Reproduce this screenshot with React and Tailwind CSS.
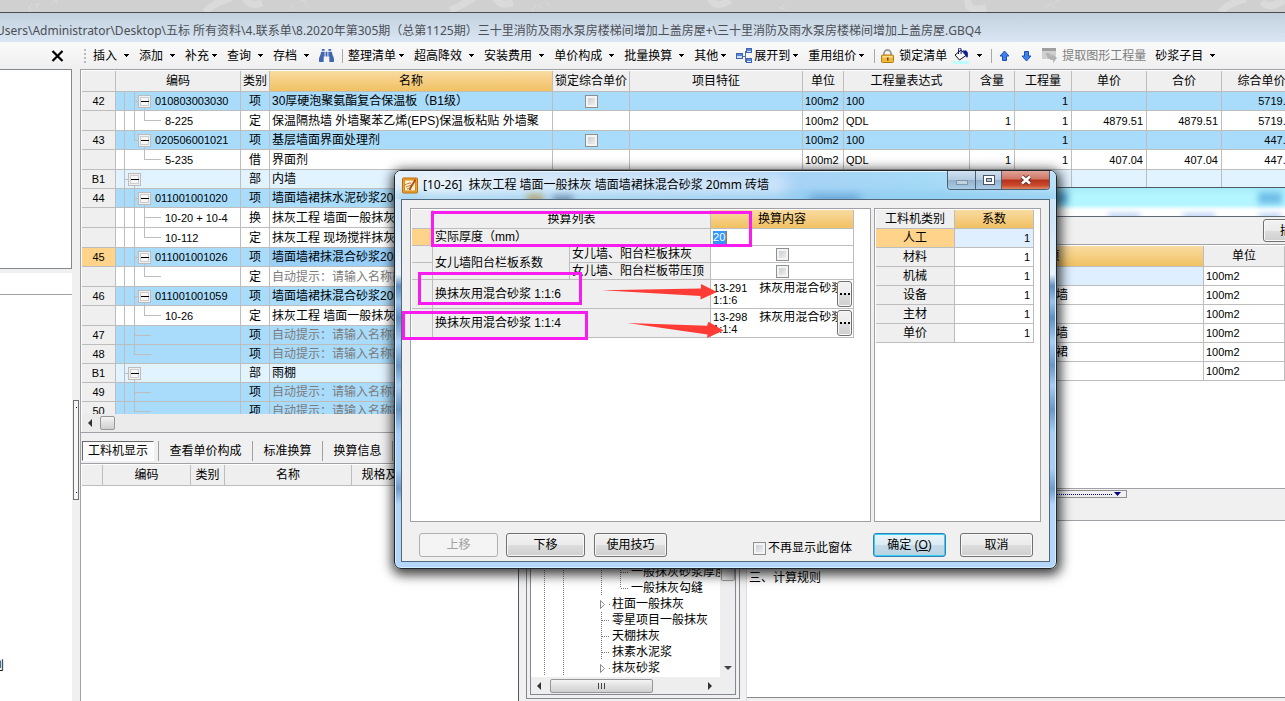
import React from "react";
import { FaBinoculars } from "react-icons/fa";

const CARET = (
  <svg width="6" height="3" viewBox="0 0 6 3" className="shrink-0" shapeRendering="crispEdges">
    <path d="M0 0h5v1h-1v1h-1v1h-1v-1h-1v-1h-1z" fill="#000" />
  </svg>
);

function Drop({ label, tight }) {
  return (
    <button className={"flex shrink-0 items-center pr-[9px] whitespace-nowrap " + (tight ? "gap-[3px]" : "gap-[7px]")}>
      <span>{label}</span>
      {CARET}
    </button>
  );
}

function Sep() {
  return <span className="h-[14px] w-px shrink-0 bg-[#a8a8a8]" />;
}

function Toolbar() {
  return (
    <div className="flex h-[27px] items-center bg-gradient-to-b from-[#fafafa] to-[#efefef] text-[12px] text-black">
      <svg width="4" height="16" viewBox="0 0 4 16" className="mr-[5px] ml-1 shrink-0" shapeRendering="crispEdges">
        <path d="M0 1h2v2h-2zM0 5h2v2h-2zM0 9h2v2h-2zM0 13h2v2h-2z" fill="#b8b8b8" />
      </svg>
      <Drop label="插入" />
      <Drop label="添加" />
      <Drop label="补充" tight />
      <Drop label="查询" />
      <Drop label="存档" />
      <button aria-label="查找" className="mr-2 shrink-0">
        <FaBinoculars size={15} color="#3f66ae" />
      </button>
      <Sep />
      <span className="w-[5px] shrink-0" />
      <Drop label="整理清单" tight />
      <Drop label="超高降效" />
      <Drop label="安装费用" />
      <Drop label="单价构成" />
      <Drop label="批量换算" />
      <Drop label="其他" tight />
      <svg width="17" height="16" viewBox="0 0 17 16" className="mr-px shrink-0" shapeRendering="crispEdges">
        <path d="M6 8h3M9 3v10M9 3h2M9 13h2" stroke="#5b6f94" fill="none" />
        <rect x="0.500" y="5.500" width="6" height="5" fill="#cfe0fb" stroke="#3f63ad" />
        <rect x="10.500" y="0.500" width="5" height="4" fill="#cfe0fb" stroke="#3f63ad" />
        <rect x="10.500" y="10.500" width="5" height="4" fill="#cfe0fb" stroke="#3f63ad" />
        <path d="M1 6h5v2H1zM11 1h4v2h-4zM11 11h4v2h-4z" fill="#5a86d6" />
      </svg>
      <Drop label="展开到" tight />
      <Drop label="重用组价" tight />
      <Sep />
      <button className="ml-1 flex shrink-0 items-center gap-[5px] pl-[2px] whitespace-nowrap">
        <svg width="13" height="14" viewBox="0 0 13 14">
          <path d="M3 7V4.500a3.500 3.500 0 0 1 7 0V7" fill="none" stroke="#9a9a9a" strokeWidth="1.800" />
          <rect x="0.500" y="6" width="12" height="7.500" rx="1" fill="#f0b93c" stroke="#b47a14" />
          <path d="M1.500 7h10v1.500h-10z" fill="#fbe08c" />
          <path d="M6 8.500h1.500v3H6z" fill="#6b4608" />
        </svg>
        <span>锁定清单</span>
      </button>
      <button aria-label="填充颜色" className="ml-[6px] flex shrink-0 items-center gap-2 pr-2">
        <svg width="16" height="16" viewBox="0 0 16 16">
          <path d="M2 7 8 2l5 5.500-6.500 4.500z" fill="#f6f6f6" stroke="#111" />
          <path d="M5.500 6V1.300a1.300 1.300 0 0 1 2.600 0V6" fill="none" stroke="#0a1a7a" />
          <path d="M9.500 2.500l3.500 0c2 1 2.200 3 1.700 6.500-.6 1-1.700.5-1.700-1z" fill="#0a1a9a" />
          <rect x="0" y="13" width="16" height="3" fill="#bdffff" />
        </svg>
        {CARET}
      </button>
      <Sep />
      <button aria-label="上移行" className="ml-[7px] shrink-0">
        <svg width="11" height="12" viewBox="0 0 11 12">
          <path d="M5.500 1 10 6H7.500v4.500h-4V6H1z" fill="#3c82ea" stroke="#1f4fb4" />
        </svg>
      </button>
      <button aria-label="下移行" className="ml-[11px] shrink-0">
        <svg width="11" height="12" viewBox="0 0 11 12">
          <path d="M5.500 11 10 6H7.500V1.500h-4V6H1z" fill="#3c82ea" stroke="#1f4fb4" />
        </svg>
      </button>
      <button disabled className="ml-[10px] flex shrink-0 items-center gap-1 whitespace-nowrap text-[#7d7d7d]">
        <svg width="16" height="15" viewBox="0 0 16 15">
          <rect x="0" y="0" width="14" height="11" fill="#cfcfcf" />
          <rect x="0" y="0" width="14" height="3" fill="#9f9f9f" />
          <path d="M4 5c4 0 5 1 6 4V6l5 4-4 5v-3c-4 0-6-2-7-7z" fill="#b2b2b2" />
        </svg>
        <span>提取图形工程量</span>
      </button>
      <span className="w-[9px] shrink-0" />
      <Drop label="砂浆子目" />
    </div>
  );
}

const HEADS = [
  ["", 34], ["编码", 125], ["类别", 29], ["名称", 283], ["锁定综合单价", 77], ["项目特征", 173], ["单位", 41],
  ["工程量表达式", 126], ["含量", 45], ["工程量", 57], ["单价", 75], ["合价", 75], ["综合单价", 80],
];

/* v = full guides, h = half guides, s = horizontal stub, b = box x, d = guide starting below the box */
const T = {
  item: { v: [8, 18], s: [18, 22], b: 22, d: 28, tx: 39 },
  itemLast: { v: [8], h: [18], s: [18, 22], b: 22, d: 28, tx: 39 },
  child: { v: [8, 18], h: [28], s: [28, 45], tx: 49 },
  childMore: { v: [8, 18, 28], s: [28, 45], tx: 49 },
  childTail: { v: [8], h: [28], s: [28, 45], tx: 49 },
  part: { v: [8], s: [8, 12], b: 12, d: 18, tx: 39 },
  leaf: { v: [8, 18], s: [18, 35], tx: 39 },
  leafLast: { v: [8], h: [18], s: [18, 35], tx: 39 },
};
const HINT = "自动提示：请输入名称简称";
const ROWS = [
  { n: "42", t: "item", c: "010803003030", k: "项", m: "30厚硬泡聚氨酯复合保温板（B1级）", x: 1, r: ["100m2", "100", "", "1", "", "", "5719.51"] },
  { n: "", t: "child", c: "8-225", k: "定", m: "保温隔热墙 外墙聚苯乙烯(EPS)保温板粘贴 外墙聚", r: ["100m2", "QDL", "1", "1", "4879.51", "4879.51", "5719.51"] },
  { n: "43", t: "itemLast", c: "020506001021", k: "项", m: "基层墙面界面处理剂", x: 1, r: ["100m2", "100", "", "1", "", "", "447.04"] },
  { n: "", t: "childTail", c: "5-235", k: "借", m: "界面剂", r: ["100m2", "QDL", "1", "1", "407.04", "407.04", "447.04"] },
  { n: "B1", t: "part", c: "", k: "部", m: "内墙" },
  { n: "44", t: "item", c: "011001001020", k: "项", m: "墙面墙裙抹水泥砂浆20mm" },
  { n: "", t: "childMore", c: "10-20 + 10-4", k: "换", m: "抹灰工程 墙面一般抹灰" },
  { n: "", t: "child", c: "10-112", k: "定", m: "抹灰工程 现场搅拌抹灰" },
  { n: "45", t: "item", c: "011001001026", k: "项", m: "墙面墙裙抹混合砂浆20mm", sel: 1 },
  { n: "", t: "child", c: "", k: "定", m: HINT, g: 1 },
  { n: "46", t: "item", c: "011001001059", k: "项", m: "墙面墙裙抹混合砂浆20mm" },
  { n: "", t: "child", c: "10-26", k: "定", m: "抹灰工程 墙面一般抹灰" },
  { n: "47", t: "leaf", c: "", k: "项", m: HINT, g: 1 },
  { n: "48", t: "leafLast", c: "", k: "项", m: HINT, g: 1 },
  { n: "B1", t: "part", c: "", k: "部", m: "雨棚" },
  { n: "49", t: "leaf", c: "", k: "项", m: HINT, g: 1 },
  { n: "50", t: "leafLast", c: "", k: "项", m: HINT, g: 1 },
];

function Guides({ type }) {
  const g = T[type];
  return (
    <svg width={g.tx} height="19" viewBox={"0 0 " + g.tx + " 19"} className="block shrink-0 overflow-visible" shapeRendering="crispEdges">
      {(g.v || []).map((x) => <rect key={x} x={x} y="0" width="1" height="19" fill="#bdbdbd" />)}
      {(g.h || []).map((x) => <rect key={x} x={x} y="0" width="1" height="10" fill="#bdbdbd" />)}
      <rect x={g.s[0]} y="9" width={g.s[1] - g.s[0]} height="1" fill="#bdbdbd" />
      {g.d && <rect x={g.d} y="9" width="1" height="10" fill="#bdbdbd" />}
      {g.b && (
        <g>
          <rect x={g.b + 0.5} y="3.500" width="12" height="12" fill="#f0f0f0" stroke="#bcbcbc" />
          <rect x={g.b + 2.5} y="5.500" width="8" height="8" fill="#f6f6f6" stroke="#cccccc" />
          <rect x={g.b + 3} y="9" width="8" height="1" fill="#000" />
        </g>
      )}
    </svg>
  );
}

const CHECK =
  "block size-[13px] appearance-none border border-[#8e8f8f] bg-gradient-to-br from-[#c2c6cc] to-[#f6f6f6] shadow-[inset_0_0_0_2px_#f4f4f4]";
const CELL = "border-r border-b border-[#bdbdbd] p-0 leading-[16px] whitespace-nowrap overflow-hidden ";
const GOLD = "bg-gradient-to-b from-[#f9dba0] to-[#f1c162] ";

function MainGrid() {
  return (
    <div className="h-[343px] overflow-hidden">
      <table className="w-[1220px] table-fixed border-separate border-spacing-0 text-[12px]">
        <colgroup>
          {HEADS.map((h, i) => <col key={i} style={{ width: h[1] }} />)}
        </colgroup>
        <thead>
          <tr className="h-[21px]">
            {HEADS.map((h, i) => (
              <th key={i} className={CELL + "h-[21px] text-center font-normal " + (i === 3 ? GOLD : "bg-[#efefef]")}>{h[0]}</th>
            ))}
          </tr>
        </thead>
        <tbody>
          {ROWS.map((r, i) => {
            const bg = r.t === "part" ? "bg-[#e1f3ff] " : r.t.startsWith("child") ? "bg-white " : "bg-[#a9dbfa] ";
            const h = r.t.startsWith("child") ? "h-[20px] " : "h-[19px] ";
            const v = r.r || ["", "", "", "", "", "", ""];
            return (
              <tr key={i} className={h}>
                <td className={CELL + h + "text-center text-[11px] " + (r.sel ? "bg-[#ffd38a]" : "bg-[#efefef]")}>{r.n}</td>
                <td className={CELL + h + bg}>
                  <div className={"flex items-center overflow-hidden text-[11px] " + (r.t.startsWith("child") ? "h-[19px]" : "h-[18px]")}>
                    <Guides type={r.t} />
                    <span>{r.c}</span>
                  </div>
                </td>
                <td className={CELL + h + bg + "text-center"}>{r.k}</td>
                <td className={CELL + h + (r.sel ? "bg-[#99d0fa] " : bg) + "pl-[2px] " + (r.g ? "text-[#7c7c7c]" : "")}>{r.m}</td>
                <td className={CELL + h + bg}>
                  {r.x && <input type="checkbox" aria-label="锁定综合单价" className={CHECK + " mx-auto"} />}
                </td>
                <td className={CELL + h + bg} />
                <td className={CELL + h + bg + "pl-[2px] text-[11px]"}>{v[0]}</td>
                <td className={CELL + h + bg + "pl-[2px] text-[11px]"}>{v[1]}</td>
                <td className={CELL + h + bg + "pr-[3px] text-right text-[11px]"}>{v[2]}</td>
                <td className={CELL + h + bg + "pr-[3px] text-right text-[11px]"}>{v[3]}</td>
                <td className={CELL + h + bg + "pr-[3px] text-right text-[11px]"}>{v[4]}</td>
                <td className={CELL + h + bg + "pr-[3px] text-right text-[11px]"}>{v[5]}</td>
                <td className={CELL + h + bg + "pr-[3px] text-right text-[11px]"}>{v[6]}</td>
              </tr>
            );
          })}
        </tbody>
      </table>
    </div>
  );
}

const DETAIL = [["", 21], ["编码", 88], ["类别", 34], ["名称", 127], ["规格及型号", 80]];

function MainPane() {
  return (
    <div className="flex min-w-0 flex-1 flex-col border-l border-[#a0a0a6] bg-[#f0f0f0]">
      <div className="border-t border-b border-[#a0a0a6] bg-white pt-px pl-px">
        <MainGrid />
        <div className="flex h-[18px] items-center bg-[#ebebeb] pl-1">
          <svg width="8" height="8" viewBox="0 0 8 8"><path d="M6 0v8L2 4z" fill="#333" /></svg>
          <span className="ml-[6px] h-[14px] w-[15px] rounded-[2px] border border-[#979797] bg-gradient-to-b from-[#f4f4f4] to-[#cfcfcf]" />
        </div>
      </div>
      <div className="flex h-[30px] items-center pt-[6px] pl-px text-[12px] whitespace-nowrap">
        <button className="h-[20px] w-[72px] border border-t-[#696969] border-r-white border-b-white border-l-[#696969] bg-[#fafafa] leading-[18px]">工料机显示</button>
        <span className="ml-1 h-5 w-px bg-[#a0a0a0]" />
        <button className="w-[93px] leading-[18px]">查看单价构成</button>
        <span className="h-5 w-px bg-[#a0a0a0]" />
        <button className="w-[69px] leading-[18px]">标准换算</button>
        <span className="h-5 w-px bg-[#a0a0a0]" />
        <button className="w-[69px] leading-[18px]">换算信息</button>
        <span className="h-5 w-px bg-[#a0a0a0]" />
      </div>
      <div className="flex-1 border-t border-[#a0a0a6] bg-white pt-px pl-px">
        <table className="w-[350px] table-fixed border-separate border-spacing-0 text-[12px]">
          <colgroup>{DETAIL.map((h, i) => <col key={i} style={{ width: h[1] }} />)}</colgroup>
          <thead>
            <tr>
              {DETAIL.map((h, i) => (
                <th key={i} className={CELL + "h-[21px] bg-[#efefef] text-center font-normal"}>{h[0]}</th>
              ))}
            </tr>
          </thead>
        </table>
      </div>
    </div>
  );
}

function SidePane() {
  return (
    <div className="flex w-[80px] shrink-0 bg-[#f0f0f0]">
      <div className="flex w-[72px] flex-col">
        <div className="h-[200px] border-t border-r border-b border-[#828790] bg-white" />
        <div className="h-1" />
        <div className="h-[22px] border-b border-[#a0a0a6] bg-white" />
        <div className="flex flex-1 flex-col justify-end overflow-hidden bg-white pb-[26px]">
          <span className="-ml-2 text-[12px] leading-[18px]">则</span>
        </div>
      </div>
      <div className="flex flex-1 flex-col pt-[331px] pl-px">
        <div className="flex h-[100px] w-[6px] flex-col items-center justify-between border border-[#707070] bg-[#f6f6f6] py-[6px]">
          <span className="size-px bg-[#000080]" />
          <span className="size-px bg-[#000080]" />
        </div>
      </div>
    </div>
  );
}

const TREE = [
  { t: "一般抹灰砂浆厚度", deep: 1 },
  { t: "一般抹灰勾缝", deep: 1, last: 1 },
  { t: "柱面一般抹灰", tri: 1 },
  { t: "零星项目一般抹灰" },
  { t: "天棚抹灰" },
  { t: "抹素水泥浆" },
  { t: "抹灰砂浆", tri: 1 },
];

function TreeRow({ n }) {
  const w = n.deep ? 100 : 81;
  const s = { stroke: "#7a7a7a", strokeDasharray: "1 1", fill: "none" };
  return (
    <li className="flex h-4 items-center whitespace-nowrap">
      <svg width={w} height="16" viewBox={"0 0 " + w + " 16"} className="shrink-0" shapeRendering="crispEdges">
        <path d="M13.500 0v16M32.500 0v16" {...s} />
        {!n.tri && <path d="M70.500 0v16" {...s} />}
        {n.deep && <path d={n.last ? "M89.500 0v8" : "M89.500 0v16"} {...s} />}
        {n.deep && <path d="M90 8.500h8" {...s} />}
        {!n.deep && !n.tri && <path d="M71 8.500h8" {...s} />}
        {n.tri && <path d="M69.500 4.500v8l4-4z" fill="#fff" stroke="#8a8a8a" shapeRendering="auto" />}
        {n.tri && <rect x="78" y="8" width="1" height="1" fill="#777" />}
      </svg>
      <span>{n.t}</span>
    </li>
  );
}

const BTN = "rounded-[3px] border border-[#707070] bg-[linear-gradient(#f2f2f2,#ebebeb_50%,#dddddd_51%,#cfcfcf)] shadow-[inset_0_0_0_1px_#f8f8f8] text-[12px] ";
const PARTS = ["", "砖墙", "", "外墙", "墙裙", ""];

function QueryWindow() {
  return (
    <section className="absolute top-[187px] right-0 bottom-0 left-[518px] flex flex-col border-t border-l border-[#4d5a66] bg-[#f0f0f0]">
      <div className="relative h-[28px] shrink-0 overflow-hidden bg-[linear-gradient(#a8ecfa,#b4f6ff_30%,#b4f6ff_60%,#ffffff_78%)]">
        <span className="absolute top-1 right-[3px] h-3 w-[24px] bg-[#6fbdea] blur-[3px]" />
        <span className="absolute top-1 right-[217px] h-3 w-[14px] bg-[#5cb2e6] blur-[3px]" />
        <span className="absolute right-[145px] -bottom-1 h-[6px] w-[32px] bg-[#a9c8f2] blur-[3px]" />
        <span className="absolute right-[70px] -bottom-1 h-[6px] w-[32px] bg-[#a9c8f2] blur-[3px]" />
        <span className="absolute right-1 -bottom-1 h-[6px] w-[22px] bg-[#a9c8f2] blur-[3px]" />
      </div>
      <div className="flex h-[29px] shrink-0 items-center justify-end overflow-hidden border-t border-b border-t-[#5f6a74] border-b-[#a0a0a6]">
        <button className={BTN + "-mr-[20px] h-[23px] w-[42px] shrink-0 pl-4 whitespace-nowrap"}>插入</button>
      </div>
      <div className="flex min-h-0 flex-1">
        <div className="flex w-[227px] shrink-0 flex-col py-[2px] pr-[6px] pl-[7px]">
          <div className="flex min-h-0 flex-1 border border-[#828790] p-[3px]">
            <div className="flex min-w-0 flex-1 flex-col border border-[#828790] bg-white">
              <div className="flex min-h-0 flex-1">
                <ul className="flex min-w-0 flex-1 flex-col justify-end overflow-hidden pb-px text-[12px]">
                  {TREE.map((n) => <TreeRow key={n.t} n={n} />)}
                </ul>
                <div className="flex w-[15px] shrink-0 flex-col items-center justify-end bg-[#eeeeee] pb-[7px]">
                  <span className="mb-[85px] h-[60px] w-[14px] rounded-[2px] border border-[#979797] bg-gradient-to-r from-[#f4f4f4] to-[#cfcfcf]" />
                  <svg width="8" height="4" viewBox="0 0 8 4"><path d="M0 0h8L4 4z" fill="#444" /></svg>
                </div>
              </div>
              <div className="flex h-[17px] items-center bg-[#eeeeee] px-[6px]">
                <svg width="5" height="8" viewBox="0 0 5 8"><path d="M4 0v8L0 4z" fill="#333" /></svg>
                <span className="ml-2 flex h-[14px] w-[103px] items-center justify-center gap-[2px] rounded-[2px] border border-[#979797] bg-gradient-to-b from-[#f4f4f4] to-[#cfcfcf]">
                  <i className="h-[6px] w-px bg-[#444]" />
                  <i className="h-[6px] w-px bg-[#444]" />
                  <i className="h-[6px] w-px bg-[#444]" />
                </span>
                <svg width="5" height="8" viewBox="0 0 5 8" className="mr-4 ml-auto"><path d="M0 0v8l4-4z" fill="#333" /></svg>
              </div>
            </div>
          </div>
        </div>
        <div className="flex min-w-0 flex-1 flex-col border-l border-[#dcdce4]">
          <div className="flex h-[244px] shrink-0 justify-end border-b border-[#a0a0a6] bg-white pt-px">
            <table className="h-max w-[393px] table-fixed border-separate border-spacing-0 text-[12px]">
              <colgroup><col /><col className="w-[81px]" /></colgroup>
              <thead>
                <tr>
                  <th className={CELL + GOLD + "h-[21px] text-center font-normal"}>选项</th>
                  <th className={CELL + "h-[21px] bg-[#efefef] text-center font-normal"}>单位</th>
                </tr>
              </thead>
              <tbody>
                {PARTS.map((u, i) => (
                  <tr key={i}>
                    <td className={CELL + "h-[19px] pl-[152px] " + (i === 0 ? "bg-[#dfefff]" : "bg-white")}>{u}</td>
                    <td className={CELL + "h-[19px] bg-white pl-[2px] text-[11px]"}>100m2</td>
                  </tr>
                ))}
              </tbody>
            </table>
          </div>
          <div className="flex h-[11px] shrink-0 pt-px">
            <div className="flex h-2 w-[380px] items-center border border-[#909090] pr-[5px]">
              <span className="mr-[2px] flex-1 border-t border-dotted border-[#000080]" />
              <svg width="7" height="4" viewBox="0 0 7 4"><path d="M0 0h7L3.500 4z" fill="#000080" /></svg>
            </div>
          </div>
          <div className="h-[21px] shrink-0 border-b border-[#a0a0a6]" />
          <div className="mb-[3px] flex-1 border-b border-[#828790] bg-white pt-[48px] pl-[2px] text-[12px] leading-[18px]">三、计算规则</div>
        </div>
      </div>
    </section>
  );
}

function Field({ children, className }) {
  return <td className={CELL + "bg-[#efefef] pl-[2px] text-left " + (className || "")}>{children}</td>;
}

function ConvertTable() {
  const mat = (code, ratio) => (
    <td className={CELL + "h-[29px] bg-white"}>
      <div className="flex h-[28px] items-center">
        <div className="min-w-0 flex-1 overflow-hidden pl-[2px] leading-[12px]">
          <div className="flex gap-3"><span className="text-[11px]">{code}</span><span>抹灰用混合砂浆</span></div>
          <div className="text-[11px]">{ratio}</div>
        </div>
        <button aria-label={"选择材料 " + ratio} className={BTN + "mr-px flex h-[26px] w-[15px] shrink-0 items-center justify-center gap-[2px]"}>
          <i className="size-[2px] bg-black" /><i className="size-[2px] bg-black" /><i className="size-[2px] bg-black" />
        </button>
      </div>
    </td>
  );
  const mark = (h) => <td className={CELL + h + " bg-[#efefef]"} />;
  return (
    <table className="w-[442px] table-fixed border-separate border-spacing-0 text-[12px]">
      <colgroup><col className="w-[21px]" /><col className="w-[137px]" /><col className="w-[141px]" /><col className="w-[143px]" /></colgroup>
      <thead>
        <tr>
          <th className={CELL + "h-[19px] bg-[#efefef]"} />
          <th colSpan="2" className={CELL + "h-[19px] bg-[#efefef] text-center font-normal"}>换算列表</th>
          <th className={CELL + GOLD + "h-[19px] text-center font-normal"}>换算内容</th>
        </tr>
      </thead>
      <tbody>
        <tr>
          <td className={CELL + "h-[17px] bg-[#ffd38a]"} />
          <td colSpan="2" className={CELL + "bg-[#efefef] pl-[2px]"}><label htmlFor="thick">实际厚度（mm）</label></td>
          <td className={CELL + "bg-white pl-[2px]"}>
            <input id="thick" defaultValue="20" className="block h-[13px] w-[14px] border-r border-[#c87020] bg-[#3397fd] p-0 text-[11px] leading-[13px] text-white outline-none" />
          </td>
        </tr>
        <tr>
          {mark("h-[17px]")}
          <td rowSpan="2" className={CELL + "bg-[#efefef] pl-[2px]"}>女儿墙阳台栏板系数</td>
          <Field><label htmlFor="c1">女儿墙、阳台栏板抹灰</label></Field>
          <td className={CELL + "bg-white"}><input id="c1" type="checkbox" className={CHECK + " mx-auto"} /></td>
        </tr>
        <tr>
          {mark("h-[17px]")}
          <Field><label htmlFor="c2">女儿墙、阳台栏板带压顶</label></Field>
          <td className={CELL + "bg-white"}><input id="c2" type="checkbox" className={CHECK + " mx-auto"} /></td>
        </tr>
        <tr>
          {mark("h-[29px]")}
          <td colSpan="2" className={CELL + "bg-[#efefef] pl-[2px]"}>换抹灰用混合砂浆 1:1:6</td>
          {mat("13-291", "1:1:6")}
        </tr>
        <tr>
          {mark("h-[29px]")}
          <td colSpan="2" className={CELL + "bg-[#efefef] pl-[2px]"}>换抹灰用混合砂浆 1:1:4</td>
          {mat("13-298", "1:1:4")}
        </tr>
      </tbody>
    </table>
  );
}

function Dialog() {
  return (
    <section
      role="dialog"
      aria-label="换算"
      className="absolute top-[170px] left-[394px] flex h-[399px] w-[663px] flex-col rounded-[7px] border border-[#20262c] bg-[linear-gradient(#d4e6f6,#cfe4f6_12%,#eaf2f8_26%,#5f8fc0_29%,#9cc4ea_33%,#5f8fc0_37%,#a9cff5_43%,#6a97c4_49%,#a8cdf2_54%,#6a97c4_60%,#a9cff5_66%,#a9cff5_75%,#6f9cc8_80%,#b4d6fb_84%,#b4d6fb)] px-[6px] pb-[6px] shadow-[inset_0_0_0_1px_#d5edff,1px_3px_12px_3px_rgba(0,0,0,0.75)]"
    >
      <header className="relative -mx-[6px] flex h-[28px] shrink-0 items-start overflow-hidden rounded-t-[6px] bg-[linear-gradient(90deg,#e6f1fa,#c3def6_20%,#a9d1f7_55%,#a5daf6_80%,#bde2f8)] shadow-[inset_1px_1px_0_#e5f4ff]">
        <span className="absolute top-5 left-0 h-5 w-full bg-[#86c8ee] opacity-60 blur-[4px]" />
        <span className="absolute top-1 left-6 h-5 w-[370px] rounded-full bg-white opacity-50 blur-[8px]" />
        <span className="absolute top-[23px] left-[132px] h-3 w-4 bg-[#b59a4a] opacity-70 blur-[3px]" />
        <span className="absolute top-[24px] left-[158px] h-3 w-5 bg-[#5f7f9f] opacity-70 blur-[3px]" />
        <span className="absolute top-[24px] left-[415px] h-3 w-[50px] bg-[#3f7fc0] opacity-50 blur-[4px]" />
        <div className="relative flex items-center pt-[5px] pl-[7px]">
          <svg width="16" height="17" viewBox="0 0 16 17">
            <rect x="0.500" y="1" width="15" height="15" rx="1" fill="#f3a52a" stroke="#b86a10" />
            <rect x="2.500" y="3" width="11" height="11" fill="#fff3d4" stroke="#d98a1c" />
            <path d="M3 8c2-1 3-2 6-2M4 10c2-1 3-1 6-2M5 12c2-1 3-1 4-1" stroke="#c0742a" fill="none" />
            <path d="M13.500 2.500 9 10l-1.500 3" stroke="#b24a12" strokeWidth="1.800" fill="none" />
          </svg>
          <h1 className="ml-[5px] font-['Noto_Sans','Noto_Sans_CJK_SC',sans-serif] text-[12px] leading-[18px] font-normal whitespace-pre text-black">[10-26]  抹灰工程 墙面一般抹灰 墙面墙裙抹混合砂浆 20mm 砖墙</h1>
        </div>
        <div className="relative mr-[6px] ml-auto flex h-[19px] overflow-hidden rounded-b-[4px] border border-t-0 border-[#4c5f73]">
          <button aria-label="最小化" className="flex w-[28px] items-end justify-center border-r border-[#4c5f73] bg-[linear-gradient(#d2e2f0,#b4cbe0_48%,#94b0cb_50%,#a9cce6)] pb-[4px]">
            <span className="h-[5px] w-3 border border-[#7f93a8] bg-[#c4d2de]" />
          </button>
          <button aria-label="最大化" className="flex w-[26px] items-center justify-center border-r border-[#4c5f73] bg-[linear-gradient(#d2e2f0,#b4cbe0_48%,#94b0cb_50%,#a9cce6)]">
            <svg width="12" height="10" viewBox="0 0 12 10" shapeRendering="crispEdges">
              <path d="M0 0h12v10H0z" fill="#4a5564" /><path d="M1 1h10v8H1z" fill="#fff" />
              <path d="M3 3h6v4H3z" fill="#4a5564" /><path d="M4 4h4v2H4z" fill="#b6cade" />
            </svg>
          </button>
          <button aria-label="关闭" className="flex w-[47px] items-center justify-center bg-[linear-gradient(#e0a498,#cf7564_45%,#b8301a_50%,#c94a2c_80%,#e08a68)]">
            <svg width="12" height="10" viewBox="0 0 12 10">
              <path d="M2 1.500 10 8.500M10 1.500 2 8.500" stroke="#5a3030" strokeWidth="4.400" />
              <path d="M2 1.500 10 8.500M10 1.500 2 8.500" stroke="#fff" strokeWidth="2.600" />
            </svg>
          </button>
        </div>
      </header>
      <div className="flex min-h-0 flex-1 flex-col border border-[#55677a] bg-[#f0f0f0] px-2 pt-2">
        <div className="flex h-[314px] shrink-0 gap-[3px]">
          <div className="flex-1 border border-[#a0a0a6] bg-white p-px"><ConvertTable /></div>
          <div className="w-[167px] border border-[#a0a0a6] bg-white p-px">
            <table className="w-[158px] table-fixed border-separate border-spacing-0 text-[12px]">
              <thead>
                <tr>
                  <th className={CELL + "h-[19px] bg-[#efefef] text-center font-normal"}>工料机类别</th>
                  <th className={CELL + GOLD + "h-[19px] text-center font-normal"}>系数</th>
                </tr>
              </thead>
              <tbody>
                {["人工", "材料", "机械", "设备", "主材", "单价"].map((k, i) => (
                  <tr key={k}>
                    <td className={CELL + "h-[19px] text-center " + (i === 0 ? "bg-[#ffd38a]" : "bg-[#efefef]")}>{k}</td>
                    <td className={CELL + "h-[19px] pr-[3px] text-right text-[11px] " + (i === 0 ? "bg-[#dfefff]" : "bg-white")}>1</td>
                  </tr>
                ))}
              </tbody>
            </table>
          </div>
        </div>
        <div className="flex items-start pt-[11px] pl-[9px] whitespace-nowrap">
          <button disabled className="h-6 w-[79px] rounded-[3px] border border-[#b0b0b0] bg-[#f4f4f4] text-[12px] text-[#a0a0a0]">上移</button>
          <button className={BTN + "ml-2 h-6 w-[79px]"}>下移</button>
          <button className={BTN + "ml-[9px] h-6 w-[73px]"}>使用技巧</button>
          <label className="mt-[6px] mr-[21px] ml-auto flex items-center gap-[2px] text-[12px] leading-[18px]">
            <input type="checkbox" className={CHECK} />
            <span>不再显示此窗体</span>
          </label>
          <button className="h-6 w-[73px] rounded-[3px] border border-[#3c7fb1] bg-[linear-gradient(#eaf3f8,#dcebf3_50%,#c6dbe8_51%,#b9d3e2)] text-[12px] shadow-[inset_0_0_0_1px_#2fd0fa]">确定 (<u>O</u>)</button>
          <button className={BTN + "mr-2 ml-[14px] h-6 w-[73px]"}>取消</button>
        </div>
      </div>
      <svg width="663" height="399" viewBox="394 170 663 399" className="pointer-events-none absolute -top-px -left-px">
        <g fill="none" stroke="#f91cef" strokeWidth="3">
          <rect x="432.500" y="212.500" width="318" height="33" />
          <rect x="419.500" y="273.500" width="161" height="30" />
          <rect x="403.500" y="312.500" width="183" height="26" />
        </g>
        <g fill="#ff3b36">
          <path d="M602 290.300 701 288.500V284l16 8-16.500 7.500v-3.500z" />
          <path d="M627.500 323 707 325.700l1.500-4L723.500 330.500 707 338l.5-3.500z" />
        </g>
      </svg>
    </section>
  );
}

export default function App() {
  return (
    <main className="relative flex h-screen w-full flex-col overflow-hidden bg-[#f0f0f0] font-['Liberation_Sans','Noto_Sans_CJK_SC',sans-serif] text-black">
      <div className="h-[13px] shrink-0 overflow-hidden border-b border-[#4a4a4c] bg-[#d0d0d0]">
        <svg width="1285" height="12" viewBox="0 0 1285 12" fill="none" stroke="#dadada">
          <g strokeWidth="1">
            <path d="M27 9l5-5M30 12V6M34 5l6-1M38 3l-1 7M52 3l5-3M55 0l3 5M290 10l4-5M301 1l6-1M304 2l5 6M532 11l4-6M538 5l6 4M545 1l6 5M780 9l5-5M778 7l8 3M1044 8l6-4M1050 3l5 5M1055 2l4-2" />
          </g>
          <g strokeWidth="7">
            <path d="M205 12q10-10 26-14M245-3q4 11 17 6M450 10q12-4 26-14M495-3q4 10 18 6M710-2q6 12 20 2M968 0q-2 12 18 8M1220 12q10-10 26-13M1262 2q8 8 22-2" />
          </g>
        </svg>
      </div>
      <div className="flex h-[29px] shrink-0 items-center overflow-hidden bg-gradient-to-b from-[#c2d0de] to-[#dae6f3] pt-[6px]">
        <span className="-ml-1 font-['Noto_Sans','Noto_Sans_CJK_SC',sans-serif] text-[12px] leading-[18px] whitespace-nowrap text-[#4c4f55]">
          Users\Administrator\Desktop\五标 所有资料\4.联系单\8.2020年第305期（总第1125期）三十里消防及雨水泵房楼梯间增加上盖房屋+\三十里消防及雨水泵房楼梯间增加上盖房屋.GBQ4
        </span>
      </div>
      <div className="flex h-[27px] shrink-0">
        <div className="flex w-[80px] shrink-0 items-center justify-end bg-gradient-to-b from-[#fafafa] to-[#efefef] pr-4">
          <button aria-label="关闭面板">
            <svg width="13" height="12" viewBox="0 0 13 12"><path d="M1.500 1 11.500 11M11.500 1 1.500 11" stroke="#000" strokeWidth="2.200" /></svg>
          </button>
        </div>
        <div className="min-w-0 flex-1 overflow-hidden"><Toolbar /></div>
      </div>
      <div className="flex min-h-0 flex-1">
        <SidePane />
        <MainPane />
      </div>
      <QueryWindow />
      <Dialog />
    </main>
  );
}
